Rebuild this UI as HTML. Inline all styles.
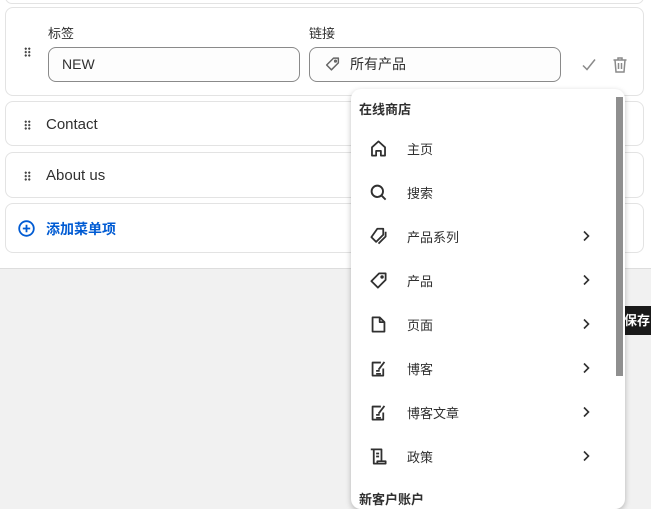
<!DOCTYPE html>
<html><head><meta charset="utf-8"><style>
*{box-sizing:border-box;margin:0;padding:0}
body{width:651px;height:504px;overflow:hidden;background:#f1f1f1;font-family:"Liberation Sans","Noto Sans CJK SC",sans-serif;color:#303030;position:relative}
.top{position:absolute;left:0;top:0;width:651px;height:269px;background:#fff;border-bottom:1px solid #ddd}
.card{position:absolute;left:5px;width:639px;border:1px solid #e3e3e3;border-radius:8px;background:#fff}
.grip{position:absolute;left:18px;width:7px;height:10px;background-image:radial-gradient(circle,#444 1px,transparent 1.2px);background-size:3.5px 3.4px}
.lbl{position:absolute;font-size:13px;color:#303030}
.inp{position:absolute;height:35px;border:1px solid #8a8a8a;border-radius:8px;background:#fdfdfd;font-size:14px;line-height:33px}
.dd{position:absolute;left:351px;top:89px;width:274px;height:420px;background:#fff;border-radius:10px;box-shadow:0 2px 6px rgba(0,0,0,.25);overflow:hidden}
.it{position:absolute;left:0;width:260px;height:44px;font-size:13px}
.it svg.ic{position:absolute;left:18px;top:12px}
.it span{position:absolute;left:56px;top:12px}
.it .ch{position:absolute;left:230px;top:15px}
</style></head><body>
<div class="top"></div>
<div class="card" style="top:-10px;height:14px"></div>
<div class="card" style="top:7px;height:89px">
  <div class="grip" style="top:39px"></div>
  <div class="lbl" style="left:42px;top:15px">标签</div>
  <div class="lbl" style="left:303px;top:15px">链接</div>
  <div class="inp" style="left:42px;top:39px;width:252px;padding-left:13px">NEW</div>
  <div class="inp" style="left:303px;top:39px;width:252px;padding-left:40px">所有产品
    <svg style="position:absolute;left:14px;top:8px" width="17" height="17" viewBox="0 0 16 16" fill="none" stroke="#666" stroke-width="1.4"><path d="M9 2h4.5v4.5L7 13 2.5 8.5z" stroke-linejoin="round"/><circle cx="10.8" cy="4.8" r=".8"/></svg>
  </div>
  <svg style="position:absolute;left:575px;top:49px" width="16" height="16" viewBox="0 0 16 16" fill="none" stroke="#8a8a8a" stroke-width="1.5"><path d="M2 8.5l4 4 8-10"/></svg>
  <svg style="position:absolute;left:606px;top:48px" width="16" height="18" viewBox="0 0 16 18" fill="none" stroke="#8a8a8a" stroke-width="1.5"><path d="M1.5 4h13M6 4V2h4v2M3 4l1 12h8l1-12M6.5 7v6M9.5 7v6"/></svg>
</div>
<div class="card" style="top:101px;height:45px"><div class="grip" style="top:18px"></div><div style="position:absolute;left:40px;top:14px;font-size:15px">Contact</div></div>
<div class="card" style="top:152px;height:46px"><div class="grip" style="top:18px"></div><div style="position:absolute;left:40px;top:14px;font-size:15px">About us</div></div>
<div class="card" style="top:203px;height:50px">
  <svg style="position:absolute;left:12px;top:16px" width="17" height="17" viewBox="0 0 17 17" fill="none" stroke="#005bd3" stroke-width="1.8"><circle cx="8.5" cy="8.5" r="7.3"/><path d="M8.5 4.8v7.4M4.8 8.5h7.4"/></svg>
  <div style="position:absolute;left:40px;top:15px;font-size:14px;font-weight:bold;color:#005bd3">添加菜单项</div>
</div>
<div style="position:absolute;left:624px;top:306px;width:30px;height:29px;background:#1a1a1a;color:#fff;font-size:13px;font-weight:bold;line-height:29px">保存</div>
<div class="dd">
  <div style="position:absolute;left:8px;top:10px;font-size:13px;font-weight:bold">在线商店</div>
  <div class="it" style="top:38px"><svg class="ic" width="19" height="19" viewBox="0 0 16 16" fill="none" stroke="#303030" stroke-width="1.5" stroke-linejoin="round"><path d="M2.5 7L8 2l5.5 5v7H10v-4H6v4H2.5z"/></svg><span>主页</span></div>
  <div class="it" style="top:82px"><svg class="ic" width="19" height="19" viewBox="0 0 16 16" fill="none" stroke="#303030" stroke-width="1.6"><circle cx="7" cy="7" r="4.8"/><path d="M10.5 10.5L14 14"/></svg><span>搜索</span></div>
  <div class="it" style="top:126px"><svg class="ic" width="19" height="19" viewBox="0 0 16 16" fill="none" stroke="#303030" stroke-width="1.5" stroke-linejoin="round"><path d="M7 1.5h5v5L6 12.5 2 8.5z"/><path d="M14 4v4l-6 6"/></svg><span>产品系列</span><svg class="ch" width="10" height="12" viewBox="0 0 10 12" fill="none" stroke="#303030" stroke-width="1.6"><path d="M3 1.5l4.5 4.5L3 10.5"/></svg></div>
  <div class="it" style="top:170px"><svg class="ic" width="19" height="19" viewBox="0 0 16 16" fill="none" stroke="#303030" stroke-width="1.5" stroke-linejoin="round"><path d="M8.5 2h5.5v5.5L7.5 14 2 8.5z"/><circle cx="11" cy="5" r=".7"/></svg><span>产品</span><svg class="ch" width="10" height="12" viewBox="0 0 10 12" fill="none" stroke="#303030" stroke-width="1.6"><path d="M3 1.5l4.5 4.5L3 10.5"/></svg></div>
  <div class="it" style="top:214px"><svg class="ic" width="19" height="19" viewBox="0 0 16 16" fill="none" stroke="#303030" stroke-width="1.5" stroke-linejoin="round"><path d="M3 2h6l4 4v8H3z"/><path d="M9 2v4h4"/></svg><span>页面</span><svg class="ch" width="10" height="12" viewBox="0 0 10 12" fill="none" stroke="#303030" stroke-width="1.6"><path d="M3 1.5l4.5 4.5L3 10.5"/></svg></div>
  <div class="it" style="top:258px"><svg class="ic" width="19" height="19" viewBox="0 0 16 16" fill="none" stroke="#303030" stroke-width="1.5" stroke-linejoin="round"><path d="M10 3H3v11h9V8"/><path d="M6 10h3M6 12.5h4M8 9l5-6.5"/></svg><span>博客</span><svg class="ch" width="10" height="12" viewBox="0 0 10 12" fill="none" stroke="#303030" stroke-width="1.6"><path d="M3 1.5l4.5 4.5L3 10.5"/></svg></div>
  <div class="it" style="top:302px"><svg class="ic" width="19" height="19" viewBox="0 0 16 16" fill="none" stroke="#303030" stroke-width="1.5" stroke-linejoin="round"><path d="M10 3H3v11h9V8"/><path d="M6 10h3M6 12.5h4M8 9l5-6.5"/></svg><span>博客文章</span><svg class="ch" width="10" height="12" viewBox="0 0 10 12" fill="none" stroke="#303030" stroke-width="1.6"><path d="M3 1.5l4.5 4.5L3 10.5"/></svg></div>
  <div class="it" style="top:346px"><svg class="ic" width="19" height="19" viewBox="0 0 16 16" fill="none" stroke="#303030" stroke-width="1.5" stroke-linejoin="round"><path d="M1.5 2h9v10M4 2v12h10v-2H7v2M6 5.5h2.5M6 8h2.5"/></svg><span>政策</span><svg class="ch" width="10" height="12" viewBox="0 0 10 12" fill="none" stroke="#303030" stroke-width="1.6"><path d="M3 1.5l4.5 4.5L3 10.5"/></svg></div>
  <div style="position:absolute;left:8px;top:400px;font-size:13px;font-weight:bold">新客户账户</div>
  <div style="position:absolute;left:265px;top:8px;width:7px;height:279px;background:#8f8f8f"></div>
</div>
</body></html>
